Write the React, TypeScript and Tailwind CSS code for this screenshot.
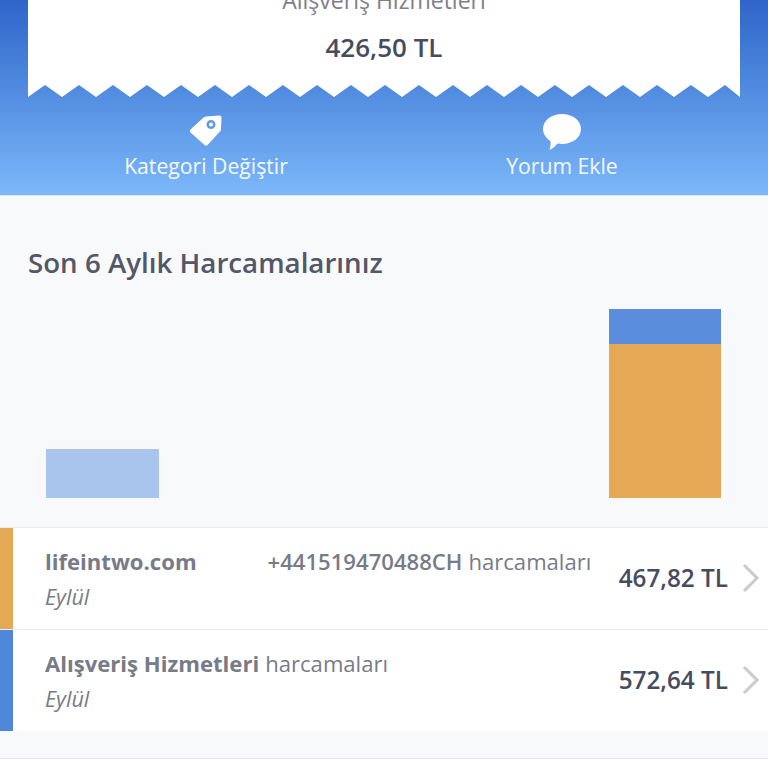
const rows = [
  { color: "bg-[#e5a955]", name: "lifeintwo.com", code: "+441519470488CH", amount: "467,82 TL" },
  { color: "bg-[#4f87db]", name: "Alışveriş Hizmetleri", code: "", amount: "572,64 TL" },
]

// receipt edge: 34px teeth along the bottom of the white card
const teeth = Array.from({ length: 21 }, (_, i) => `${i * 34},12 ${i * 34 + 17},0`).join(" ")

export default function App() {
  return (
    <div className="h-[768px] w-[768px] overflow-hidden bg-[#f8f9fb] font-['Open_Sans',sans-serif]">
      {/* Header */}
      <div className="flex h-[196px] flex-col border-b border-[#e3e6ea] bg-gradient-to-b from-[#2f65c9] to-[#7cb8f9] px-7">
        <div className="-mt-[14px] flex h-[99px] shrink-0 flex-col items-center bg-white">
          <div className="-mt-[2px] text-[23px] leading-[32px] text-[#7d808b]">Alışveriş Hizmetleri</div>
          <div className="mt-[14px] text-[26px] font-semibold leading-[34px] text-[#474b5f]">426,50 TL</div>
        </div>
        <svg className="block shrink-0" width="712" height="12" viewBox="0 0 712 12">
          <polygon fill="#fff" points={`0,-1 712,-1 712,12 ${teeth.split(" ").reverse().join(" ")} 0,12`} />
        </svg>
        <div className="mt-[17px] flex">
          <div className="flex w-[356px] flex-col items-center">
            <svg width="34" height="34" viewBox="0 0 34 34" className="-ml-[1px]">
              <path
                fillRule="evenodd"
                fill="#fff"
                d="M17 2.5 L30.5 1.5 Q32.5 1.5 32.5 3.5 L32 15 Q32 16.5 31 17.5 L18.5 31 Q17 32.5 15.5 31 L1.5 18.5 Q0 17 1.5 15.5 L14 4 Q15.5 2.7 17 2.5 Z M17.5 10.5 a4.5 4.5 0 1 0 9 0 a4.5 4.5 0 1 0 -9 0 Z M20 10.5 a2 2 0 1 1 4 0 a2 2 0 1 1 -4 0 Z"
              />
            </svg>
            <span className="mt-[5px] text-[21.2px] leading-[26px] text-[#f4f8ff]">Kategori Değiştir</span>
          </div>
          <div className="flex w-[356px] flex-col items-center">
            <svg width="38" height="36" viewBox="0 0 38 36">
              <path
                fill="#fff"
                d="M19 0 C29.5 0 38 6.5 38 15 C38 23.5 29.5 30 19 30 C17.5 30 16 29.9 14.6 29.6 C12.5 32 9.5 35 6.5 36 C7.5 33.5 7.8 29.5 7.4 27 C3 24.3 0 20 0 15 C0 6.5 8.5 0 19 0 Z"
              />
            </svg>
            <span className="mt-[3px] text-[21.2px] leading-[26px] text-[#f4f8ff]">Yorum Ekle</span>
          </div>
        </div>
      </div>

      {/* Chart */}
      <div className="px-7 pt-[47px]">
        <h2 className="text-[27.7px] font-semibold leading-[38px] text-[#535768]">Son 6 Aylık Harcamalarınız</h2>
      </div>
      <div className="mt-[26px] flex h-[191px] items-end justify-between pl-[46px] pr-[47px]">
        <div className="h-[49px] w-[113px] bg-[#a9c4ed]"></div>
        <div className="flex w-[112px] flex-col">
          <div className="h-[35px] bg-[#5b8ddd]"></div>
          <div className="h-[154px] bg-[#e5a955]"></div>
        </div>
      </div>

      {/* Rows */}
      <div className="mt-[29px] border-t border-[#e9ebee]">
        {rows.map((row, index) => (
          <div key={index} className={`flex bg-white ${index === 0 ? "h-[102px] border-b border-[#e9ebee]" : "h-[101px]"}`}>
            <div className={`w-[13px] ${row.color}`}></div>
            <div className="flex flex-1 items-center justify-between pl-[32px] pr-[8px]">
              <div className="self-start pt-[18px]">
                <div className="flex whitespace-nowrap text-[22.1px] leading-[30px] text-[#777b87]">
                  <b className="font-bold">{row.name}</b>
                  {row.code && <b className="ml-[71px] font-semibold">{row.code}</b>}
                  <span className="ml-[6px]">harcamaları</span>
                </div>
                <div className="mt-[8px] text-[21.5px] italic leading-[26px] text-[#777b87]">Eylül</div>
              </div>
              <div className="-mt-[2px] flex items-center">
                <span className="text-[24.3px] font-semibold leading-[30px] text-[#474b5f]">{row.amount}</span>
                <svg width="18" height="30" viewBox="0 0 18 30" className="ml-[14px]" fill="none">
                  <path d="M2 2 L15 15 L2 28" stroke="#c9cbce" strokeWidth="3" />
                </svg>
              </div>
            </div>
          </div>
        ))}
      </div>
      <div className="mt-[27px] h-[20px] border-t border-[#e5e8ec] bg-white"></div>
    </div>
  )
}
